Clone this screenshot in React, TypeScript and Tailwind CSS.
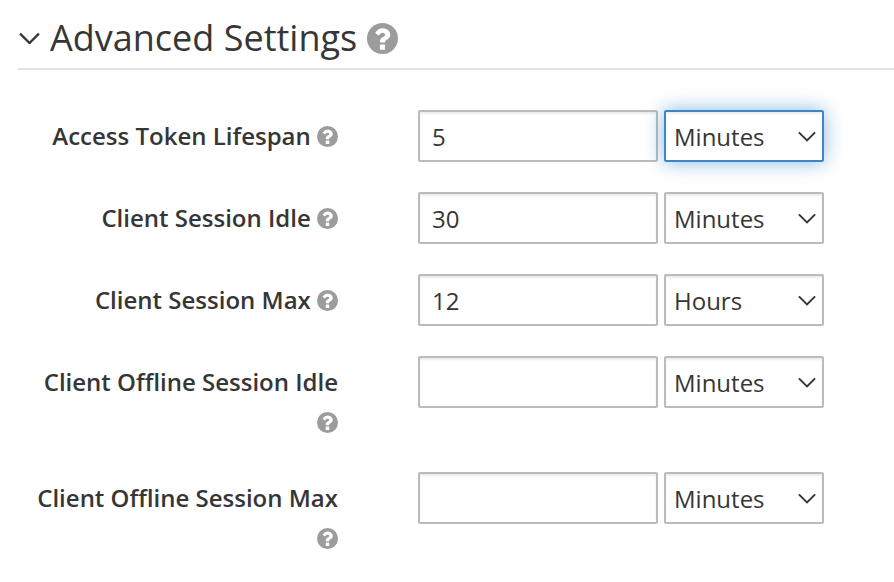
import React, { useState } from "react";

type Unit = "Minutes" | "Hours" | "Days";

interface Setting {
  id: string;
  label: string;
  value: string;
  unit: Unit;
  active?: boolean;
}

const SETTINGS: Setting[] = [
  { id: "access-token-lifespan", label: "Access Token Lifespan", value: "5", unit: "Minutes", active: true },
  { id: "client-session-idle", label: "Client Session Idle", value: "30", unit: "Minutes" },
  { id: "client-session-max", label: "Client Session Max", value: "12", unit: "Hours" },
  { id: "client-offline-session-idle", label: "Client Offline Session Idle", value: "", unit: "Minutes" },
  { id: "client-offline-session-max", label: "Client Offline Session Max", value: "", unit: "Minutes" },
];

function HelpIcon({ className }: { className: string }) {
  return (
    <svg viewBox="128 128 1536 1536" aria-hidden="true" className={`inline-block text-[#9c9c9c] ${className}`}>
      <circle cx="896" cy="896" r="768" fill="currentColor" />
      <path
        fill="#fff"
        d="M1024 1420v-192q0-14-9-23t-23-9H800q-14 0-23 9t-9 23v192q0 14 9 23t23 9h192q14 0 23-9t9-23zm256-716q0-88-55.5-163T1086 425 916 384q-243 0-371 213-15 24 8 42l132 100q7 6 19 6 16 0 25-12 53-68 86-92 34-24 86-24 48 0 85.5 26t37.5 59q0 38-20 61t-68 45q-63 28-115.5 86.5T768 1020v36q0 14 9 23t23 9h192q14 0 23-9t9-23q0-19 21.5-49.5T1100 957q32-18 49-28.5t46-35 44.5-48 28-60.5T1280 704z"
      />
    </svg>
  );
}

function Chevron({ className }: { className: string }) {
  return (
    <svg viewBox="0 0 20 12" fill="none" stroke="currentColor" aria-hidden="true" className={className}>
      <path d="M1 1.5 10 10.5 19 1.5" strokeWidth="2.2" />
    </svg>
  );
}

function SettingRow({ setting }: { setting: Setting }) {
  const [value, setValue] = useState(setting.value);
  const [unit, setUnit] = useState<string>(setting.unit);
  const selectTone = setting.active
    ? "border-[#3b87c8] shadow-[inset_0_2px_2px_rgba(3,3,3,0.075),0_0_20px_rgba(59,135,200,0.6)]"
    : "border-[#bbb] shadow-[inset_0_2px_2px_rgba(3,3,3,0.075)]";

  return (
    <div className="grid grid-cols-[320px_1fr] gap-x-20">
      <label htmlFor={setting.id} className="pt-1.5 pl-2.5 text-right leading-10 font-semibold">
        {setting.label} <HelpIcon className="size-[21px] align-[-2px]" />
      </label>
      <div className="flex items-start gap-1.5">
        <input
          id={setting.id}
          type="text"
          value={value}
          onChange={(e) => setValue(e.target.value)}
          className="h-[52px] w-60 rounded-[2px] border-2 border-[#bbb] bg-white px-3 shadow-[inset_0_2px_2px_rgba(3,3,3,0.075)] outline-none"
        />
        <div className="relative w-40">
          <select
            aria-label={`${setting.label} unit`}
            value={unit}
            onChange={(e) => setUnit(e.target.value)}
            className={`h-[52px] w-full appearance-none rounded-[2px] border-2 bg-transparent pt-0.5 pr-9 pl-2 outline-none ${selectTone}`}
          >
            <option>Minutes</option>
            <option>Hours</option>
            <option>Days</option>
          </select>
          <Chevron className="pointer-events-none absolute top-[21px] right-2 w-[18px]" />
        </div>
      </div>
    </div>
  );
}

export default function App() {
  return (
    <main className="min-h-screen bg-white pl-[18px] font-['Open_Sans','Noto_Sans',sans-serif] text-2xl text-[#363636]">
      <h2 className="border-b-2 border-[#e2e2e2] pt-2 text-4xl leading-[60px]">
        <button type="button" aria-expanded="true" className="flex items-center">
          <Chevron className="mr-2.5 ml-px w-[21px]" />
          <span>Advanced Settings</span>
          <HelpIcon className="ml-2.5 size-[31px]" />
        </button>
      </h2>
      <form className="flex flex-col gap-[30px] pt-10 pb-6">
        {SETTINGS.map((setting) => (
          <SettingRow key={setting.id} setting={setting} />
        ))}
      </form>
    </main>
  );
}
